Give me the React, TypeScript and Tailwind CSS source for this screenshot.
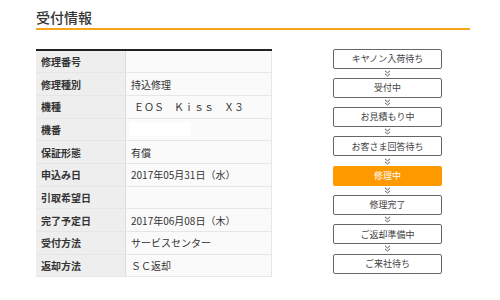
import React from "react";

const rows: { label: string; value: React.ReactNode }[] = [
  { label: "修理番号", value: "" },
  { label: "修理種別", value: "持込修理" },
  { label: "機種", value: <span className="pl-[3px]">ＥＯＳ　Ｋｉｓｓ　Ｘ３</span> },
  { label: "機番", value: <div className="w-[62px] h-[14px] bg-white -ml-[2px]" /> },
  { label: "保証形態", value: "有償" },
  { label: "申込み日", value: "2017年05月31日（水）" },
  { label: "引取希望日", value: "" },
  { label: "完了予定日", value: "2017年06月08日（木）" },
  { label: "受付方法", value: "サービスセンター" },
  { label: "返却方法", value: "ＳＣ返却" },
];

const steps = [
  "キヤノン入荷待ち",
  "受付中",
  "お見積もり中",
  "お客さま回答待ち",
  "修理中",
  "修理完了",
  "ご返却準備中",
  "ご来社待ち",
];

function Chevron() {
  return (
    <div className="h-[9.3px] flex items-center justify-center">
      <svg width="7" height="7" viewBox="0 0 7 7" fill="none" stroke="#555" strokeWidth="1">
        <path d="M1 0.8 L3.5 3 L6 0.8" />
        <path d="M1 3.8 L3.5 6 L6 3.8" />
      </svg>
    </div>
  );
}

export default function App() {
  return (
    <div
      className="w-[500px] h-[300px] bg-white text-[#333] overflow-hidden"
      style={{ fontFamily: '"Noto Sans CJK JP", "Noto Sans", sans-serif' }}
    >
      <div className="pl-[36px] pr-[30px] pt-[7px]">
        <div className="text-[14px] leading-[20px] font-medium text-[#333]">受付情報</div>
        <div className="h-[1.5px] bg-[#f8a31c] mt-[1px]" />
      </div>
      <div className="flex pl-[36px] mt-[19px]">
        <div className="w-[236px] border-t-2 border-[#222]">
          {rows.map((r, i) => (
            <div key={i} className="flex h-[22.7px] border-b border-[#e6e6e6]">
              <div className="w-[90px] bg-[#eeeeee] border-r border-[#dcdcdc] flex items-center pl-[5px] text-[10px] font-bold text-[#333]">
                {r.label}
              </div>
              <div className="flex-1 bg-[#fafafa] border-r border-[#e6e6e6] flex items-center pl-[5px] text-[10px] text-[#333]">
                {r.value}
              </div>
            </div>
          ))}
        </div>
        <div className="ml-[61px] w-[109px] flex flex-col">
          {steps.map((s, i) => (
            <React.Fragment key={i}>
              {i > 0 && <Chevron />}
              <div
                className={
                  i === 4
                    ? "h-[20px] rounded-[2px] bg-[#ff9900] flex items-center justify-center text-[9px] text-white"
                    : "h-[20px] rounded-[2px] border-[1.5px] border-[#666] bg-white flex items-center justify-center text-[9px] text-[#444]"
                }
              >
                {s}
              </div>
            </React.Fragment>
          ))}
        </div>
      </div>
    </div>
  );
}
